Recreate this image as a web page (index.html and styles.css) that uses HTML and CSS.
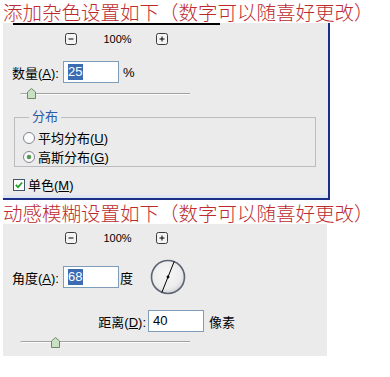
FILE: index.html
```html
<!DOCTYPE html>
<html lang="zh-CN">
<head>
  <meta charset="UTF-8">
  <meta name="viewport" content="width=device-width, initial-scale=1.0">
  <title>滤镜设置</title>
  <link rel="stylesheet" href="styles.css">
</head>
<body>

  <h1 class="note">添加杂色设置如下<span class="paren paren-open">（</span>数字可以随喜好更改<span class="paren paren-close">）</span></h1>

  <section class="panel panel-noise">
    <div class="title-rule"></div>

    <div class="zoom">
      <svg class="zoom-btn" width="12" height="12" viewBox="0 0 12 12"><rect x="0.5" y="0.5" width="11" height="11" rx="2" /><path d="M3.5 6h5" /></svg>
      <span class="zoom-value">100%</span>
      <svg class="zoom-btn" width="12" height="12" viewBox="0 0 12 12"><rect x="0.5" y="0.5" width="11" height="11" rx="2" /><path d="M3.5 6h5M6 3.5v5" /></svg>
    </div>

    <div class="field">
      <label class="field-label">数量(<u>A</u>):</label>
      <span class="input"><span class="sel">25</span></span>
      <span class="unit">%</span>
    </div>

    <div class="slider">
      <div class="track"></div>
      <svg class="thumb" style="left:7px" width="9" height="11" viewBox="0 0 9 11"><polygon points="0.5,4 4.5,0.5 8.5,4 8.5,10.5 0.5,10.5" /></svg>
    </div>

    <fieldset class="group">
      <legend>分布</legend>
      <div class="option">
        <svg class="radio" width="12" height="12" viewBox="0 0 12 12"><circle cx="6" cy="6" r="5.5" /></svg>
        <span>平均分布(<u>U</u>)</span>
      </div>
      <div class="option">
        <svg class="radio" width="12" height="12" viewBox="0 0 12 12"><circle cx="6" cy="6" r="5.5" /><circle class="dot" cx="6" cy="6" r="2.3" /></svg>
        <span>高斯分布(<u>G</u>)</span>
      </div>
    </fieldset>

    <div class="check">
      <svg class="box" width="12" height="12" viewBox="0 0 12 12"><rect x="0.5" y="0.5" width="11" height="11" /><path d="M2.8 5.8l2.2 2.3 4.2-4.6" /></svg>
      <span>单色(<u>M</u>)</span>
    </div>
  </section>

  <h1 class="note note-second">动感模糊设置如下<span class="paren paren-open">（</span>数字可以随喜好更改<span class="paren paren-close">）</span></h1>

  <section class="panel panel-blur">
    <div class="zoom">
      <svg class="zoom-btn" width="12" height="12" viewBox="0 0 12 12"><rect x="0.5" y="0.5" width="11" height="11" rx="2" /><path d="M3.5 6h5" /></svg>
      <span class="zoom-value">100%</span>
      <svg class="zoom-btn" width="12" height="12" viewBox="0 0 12 12"><rect x="0.5" y="0.5" width="11" height="11" rx="2" /><path d="M3.5 6h5M6 3.5v5" /></svg>
    </div>

    <div class="field field-angle">
      <label class="field-label">角度(<u>A</u>):</label>
      <span class="input"><span class="sel">68</span></span>
      <span class="unit unit-cjk">度</span>
      <svg class="dial" width="36" height="36" viewBox="0 0 36 36">
        <defs>
          <radialGradient id="dialFill" cx="0.45" cy="0.4" r="0.6">
            <stop offset="0" stop-color="#f7f7f7" />
            <stop offset="0.75" stop-color="#ececec" />
            <stop offset="1" stop-color="#d2d4d8" />
          </radialGradient>
        </defs>
        <circle cx="18" cy="18" r="16.5" fill="url(#dialFill)" stroke="#5d6474" stroke-width="1.6" />
        <line x1="24.2" y1="2.5" x2="11.8" y2="33.5" stroke="#000" stroke-width="1" />
        <circle cx="18" cy="18" r="1.4" fill="#000" />
      </svg>
    </div>

    <div class="field field-distance">
      <label class="field-label">距离(<u>D</u>):</label>
      <span class="input"><span class="val">40</span></span>
      <span class="unit unit-cjk">像素</span>
    </div>

    <div class="slider">
      <div class="track"></div>
      <svg class="thumb" style="left:31px" width="9" height="11" viewBox="0 0 9 11"><polygon points="0.5,4 4.5,0.5 8.5,4 8.5,10.5 0.5,10.5" /></svg>
    </div>
  </section>

</body>
</html>
```

FILE: styles.css
```css
* { box-sizing: border-box; }
body { margin: 0; background: #fff; color: #000; font-family: "Liberation Sans", "Noto Sans CJK SC", sans-serif; font-size: 13px; }
u { text-decoration: underline; text-underline-offset: 1px; }

/* red notes above each dialog */
.note { margin: 0 0 0 3px; height: 23px; font-family: "Noto Sans CJK SC", sans-serif; font-weight: 300; font-size: 19.5px; line-height: 23px; color: #bd2b2e; white-space: nowrap; }
.note-second { margin-top: 1px; }
.paren { display: inline-block; width: 1em; }
.paren-open { text-align: right; }
.paren-close { text-align: left; }

/* dialog body */
.panel { margin-left: 3px; background: #ebebeb; padding-left: 9px; }
.panel-noise { width: 327px; padding-bottom: 5px; border-right: 2px solid #1b2f86; border-bottom: 2px solid #1b2f86; box-shadow: inset 0 -3px 0 #dde6f2; }
.panel-blur { width: 324px; padding-bottom: 8px; }

.title-rule { width: 207px; height: 2px; margin-left: 1px; background: #000; }

.zoom { display: flex; align-items: center; height: 12px; margin-top: 8px; margin-left: 53px; }
.panel-blur .zoom { margin-top: 0; padding-top: 8px; height: 20px; }
.zoom-btn { display: block; }
.zoom-btn rect { fill: #f4f4f4; stroke: #3a3a3a; }
.zoom-btn path { stroke: #000; stroke-width: 1; }
.zoom-value { width: 79px; text-align: center; font-size: 11px; line-height: 12px; padding-left: 2px; }

.field { display: flex; align-items: center; margin-top: 16px; height: 22px; }
.field-label { width: 51px; white-space: nowrap; }
.input { display: flex; align-items: center; width: 56px; height: 22px; padding: 0 4px; background: #fff; border: 1px solid #7f9db9; font-size: 13px; }
.sel { background: #3a6bb3; color: #fff; line-height: 16px; padding: 0 1px 0 0; }
.val { line-height: 16px; }
.unit { margin-left: 4px; }
.unit-cjk { margin-left: 1px; }

.field-angle { margin-top: 15px; height: 36px; }
.dial { display: block; margin-left: 17px; }
.field-distance { margin-top: 15px; margin-left: 85px; }
.field-distance .field-label { text-align: right; padding-right: 2px; }
.field-distance .unit-cjk { margin-left: 5px; }

/* slider with pentagon thumb */
.slider { position: relative; width: 170px; height: 11px; margin-top: 5px; margin-left: 8px; }
.track { position: relative; top: 5px; height: 2px; border-top: 1px solid #a2a2a2; border-bottom: 1px solid #fafafa; border-left: 1px solid #b8b8b8; border-radius: 2px 0 0 0; }
.panel-blur .track { top: 4px; }
.thumb { position: absolute; top: 0; }
.thumb polygon { fill: #c9e0c2; stroke: #6a8a66; stroke-width: 1; }

/* distribution group */
.group { margin: 10px 0 0 2px; width: 302px; padding: 3px 0 0 8px; border: 1px solid #bcbcbc; min-inline-size: 0; }
.group legend { margin-left: 6px; padding: 0 3px; line-height: 16px; color: #2a5aa8; }
.option { display: flex; align-items: center; height: 19px; gap: 3px; }
.radio circle { fill: #fbfbfb; stroke: #7e8690; stroke-width: 1; }
.radio .dot { fill: #5a9a55; stroke: none; }

.check { display: flex; align-items: center; gap: 3px; height: 17px; margin-top: 9px; margin-left: 1px; }
.box rect { fill: #fff; stroke: #3c5670; }
.box path { fill: none; stroke: #23a02a; stroke-width: 1.8; }
```
